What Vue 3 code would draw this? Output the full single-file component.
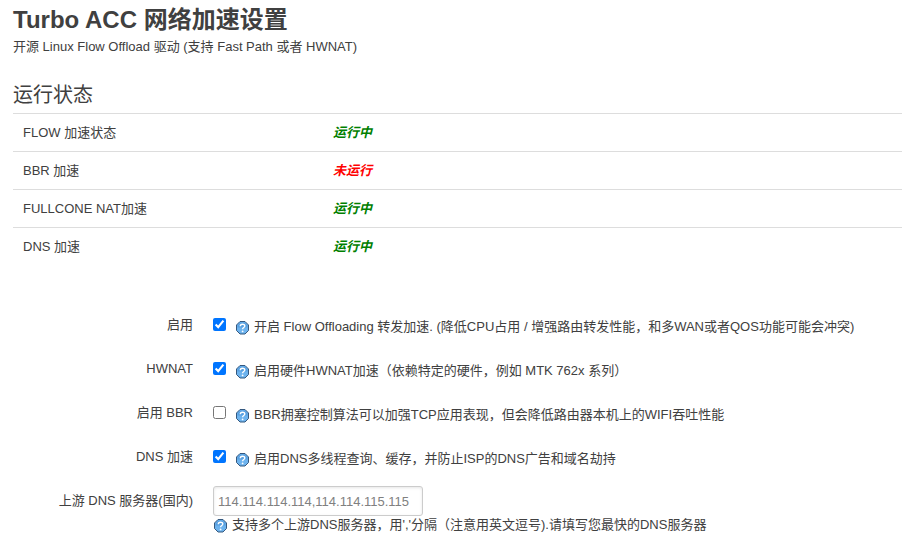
<template>
  <div class="container">
    <h2>Turbo ACC 网络加速设置</h2>
    <p class="intro">开源 Linux Flow Offload 驱动 (支持 Fast Path 或者 HWNAT)</p>

    <h3>运行状态</h3>
    <table class="status-table">
      <tbody>
        <tr v-for="item in statusList" :key="item.name">
          <td class="status-name">{{ item.name }}</td>
          <td>
            <em :class="item.running ? 'running' : 'stopped'">{{ item.running ? '运行中' : '未运行' }}</em>
          </td>
        </tr>
      </tbody>
    </table>

    <form @submit.prevent>
      <!-- Switches -->
      <div v-for="option in options" :key="option.id" class="form-row">
        <label :for="option.id">{{ option.title }}</label>
        <div class="field">
          <input type="checkbox" :id="option.id" v-model="option.enabled">
          <div class="description">
            <svg class="help-icon" viewBox="0 0 16 16" aria-hidden="true">
              <path class="help-bg" d="M5 1.5h5l3.5 3.5v5.5l-3.5 3.5H5l-3.5-3.5V5z" />
              <path class="help-shine" d="M5.4 2.5h4.2l2.9 2.9v2.1h-10V5.4z" />
              <path class="help-mark" d="M5.3 6.2c0-2.6 4.5-2.5 4.5-.2 0 1.6-2.2 1.5-2.2 3.3" />
              <circle class="help-dot" cx="7.6" cy="11.4" r="0.9" />
            </svg>
            <span>{{ option.description }}</span>
          </div>
        </div>
      </div>

      <!-- Upstream DNS -->
      <div class="form-row">
        <label for="dns">上游 DNS 服务器(国内)</label>
        <div class="field stacked">
          <input type="text" id="dns" v-model="dnsServers">
          <div class="description">
            <svg class="help-icon" viewBox="0 0 16 16" aria-hidden="true">
              <path class="help-bg" d="M5 1.5h5l3.5 3.5v5.5l-3.5 3.5H5l-3.5-3.5V5z" />
              <path class="help-shine" d="M5.4 2.5h4.2l2.9 2.9v2.1h-10V5.4z" />
              <path class="help-mark" d="M5.3 6.2c0-2.6 4.5-2.5 4.5-.2 0 1.6-2.2 1.5-2.2 3.3" />
              <circle class="help-dot" cx="7.6" cy="11.4" r="0.9" />
            </svg>
            <span>支持多个上游DNS服务器，用','分隔（注意用英文逗号).请填写您最快的DNS服务器</span>
          </div>
        </div>
      </div>
    </form>
  </div>
</template>

<script setup>
import { ref } from 'vue'

const statusList = ref([
  { name: 'FLOW 加速状态', running: true },
  { name: 'BBR 加速', running: false },
  { name: 'FULLCONE NAT加速', running: true },
  { name: 'DNS 加速', running: true }
])

const options = ref([
  {
    id: 'flow',
    title: '启用',
    enabled: true,
    description: '开启 Flow Offloading 转发加速. (降低CPU占用 / 增强路由转发性能，和多WAN或者QOS功能可能会冲突)'
  },
  {
    id: 'hwnat',
    title: 'HWNAT',
    enabled: true,
    description: '启用硬件HWNAT加速（依赖特定的硬件，例如 MTK 762x 系列）'
  },
  {
    id: 'bbr',
    title: '启用 BBR',
    enabled: false,
    description: 'BBR拥塞控制算法可以加强TCP应用表现，但会降低路由器本机上的WIFI吞吐性能'
  },
  {
    id: 'dns-boost',
    title: 'DNS 加速',
    enabled: true,
    description: '启用DNS多线程查询、缓存，并防止ISP的DNS广告和域名劫持'
  }
])

const dnsServers = ref('114.114.114.114,114.114.115.115')
</script>

<style>
body {
  background: #fff;
}
</style>

<style scoped>
.container {
  padding: 2px 0 0 13px;
  font-family: "Liberation Sans", "Noto Sans CJK SC", sans-serif;
  font-size: 13px;
  line-height: 18px;
  color: #404040;
}
h2 {
  margin: 0;
  font-size: 24px;
  line-height: 36px;
}
.intro {
  margin: 0 0 21px;
}
h3 {
  margin: 0;
  font-size: 20px;
  font-weight: 400;
  line-height: 36px;
}
.status-table {
  width: 100%;
  margin-bottom: 45px;
  border-collapse: separate;
  border-spacing: 0;
  table-layout: fixed;
}
.status-table td {
  box-sizing: border-box;
  padding: 10px 10px 9px;
  border-top: 1px solid #ddd;
}
.status-table .status-name {
  width: 310px;
}
em {
  font-weight: 700;
}
.running {
  color: green;
}
.stopped {
  color: red;
}
.form-row {
  display: flex;
  gap: 20px;
  min-height: 30px;
  margin-bottom: 14px;
}
label {
  flex: 0 0 180px;
  padding-top: 6px;
  text-align: right;
}
.field {
  display: flex;
  flex: 1;
  align-items: flex-start;
  gap: 9px;
  padding-top: 8px;
}
.field.stacked {
  flex-direction: column;
  gap: 0;
  padding-top: 0;
}
input[type='checkbox'] {
  flex: none;
  width: 13px;
  height: 13px;
  margin: 0;
}
input[type='text'] {
  box-sizing: border-box;
  width: 210px;
  height: 30px;
  padding: 4px;
  border: 1px solid #ccc;
  border-radius: 3px;
  box-shadow: inset 0 1px 3px rgba(0, 0, 0, 0.1);
  font-family: inherit;
  font-size: 13px;
  color: #808080;
}
.description {
  display: flex;
  align-items: flex-start;
  gap: 3px;
}
.help-icon {
  flex: none;
  width: 16px;
  height: 16px;
  margin-top: 2px;
}
.help-bg {
  fill: #6db3ee;
  stroke: #35587f;
}
.help-shine {
  fill: #579fe0;
}
.help-mark {
  fill: none;
  stroke: #fff;
  stroke-width: 1.4;
}
.help-dot {
  fill: #fff;
}
</style>
